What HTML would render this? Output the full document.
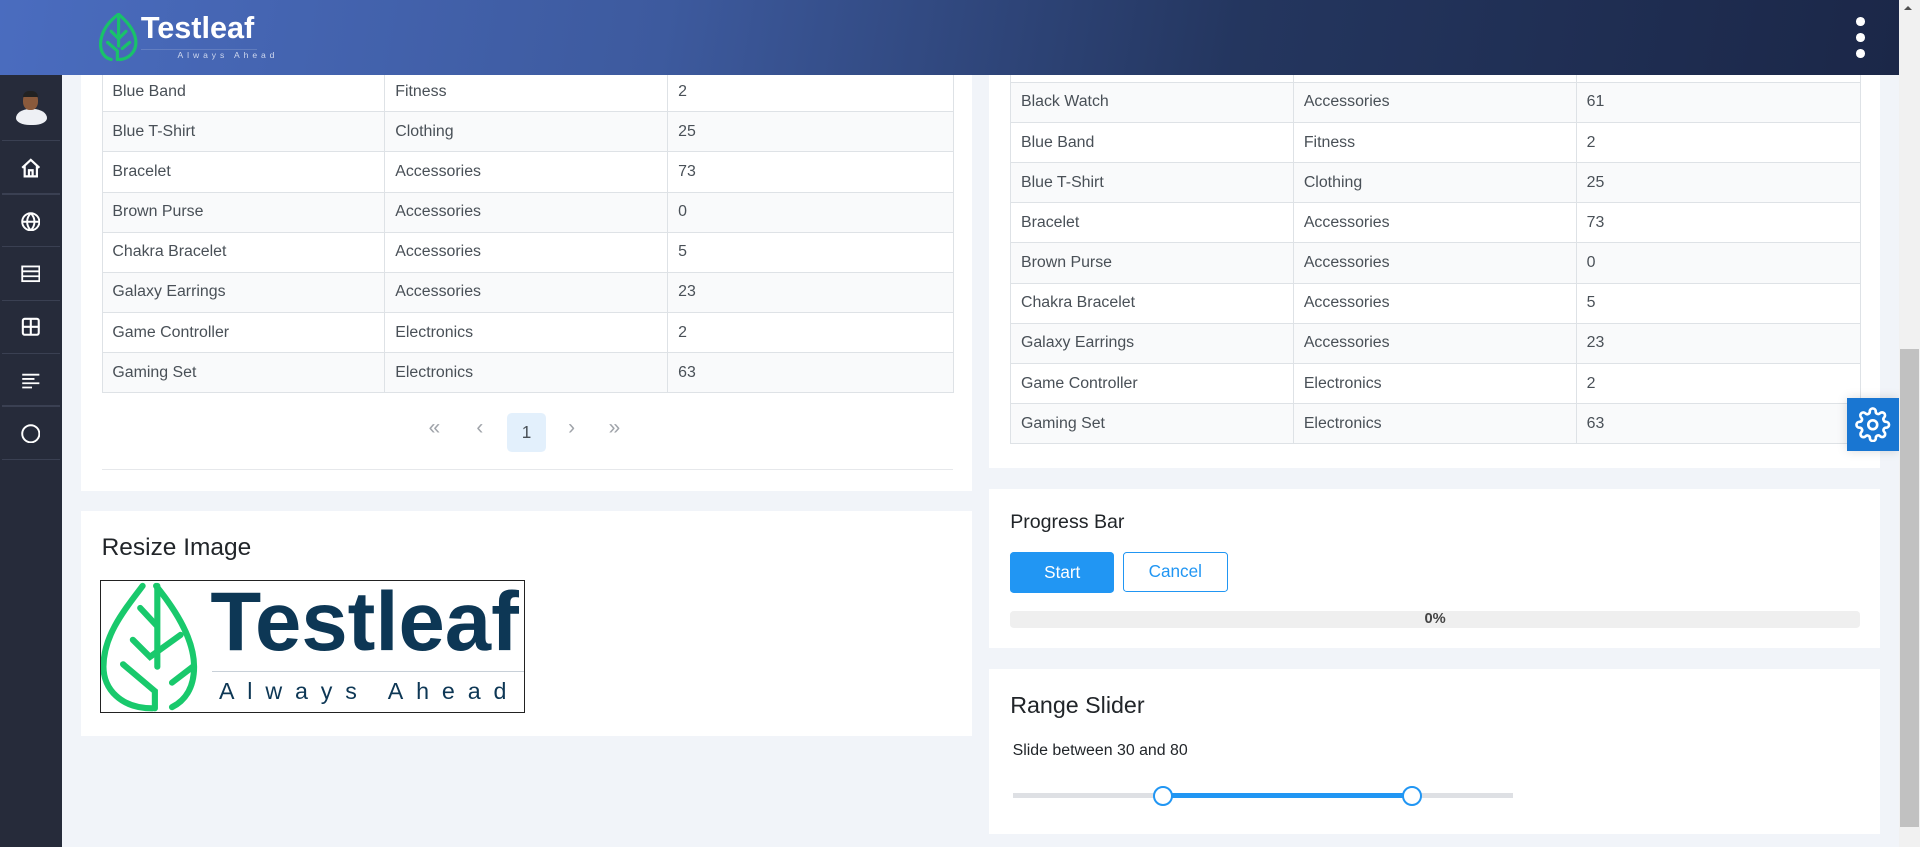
<!DOCTYPE html>
<html><head><meta charset="utf-8"><style>
html,body{margin:0;padding:0;overflow:hidden}
body{width:1568px;height:692px;zoom:1.22449;background:#f1f4f9;font-family:"Liberation Sans",sans-serif;color:#495057;position:relative}
.a{position:absolute}
.hdr{left:0;top:0;width:1551px;height:61px;background:linear-gradient(100deg,#4a6cbf 0%,#3d5a9e 35%,#24365f 65%,#1b2748 100%);z-index:5}
.side{left:0;top:61px;width:51px;height:631px;background:#262b3a;z-index:4}
.side .sep{position:absolute;left:2px;width:47px;height:1px;background:#3a4052}
.card{background:#fff}
table{border-collapse:collapse;font-size:13px;position:absolute;table-layout:fixed}
td{border:1px solid #dee2e6;height:32px;padding:0 0 0 8px;color:#495057}
tr.s td{background:#f9fafb}
.sb{left:1551px;top:0;width:17px;height:692px;background:#f1f1f1}
.pg{position:absolute;top:300px;color:#a0a4aa;font-size:17px}
</style></head><body>
<div class="a hdr">
  <svg class="a" style="left:81px;top:11px" width="32" height="40" viewBox="0 0 32 40" fill="none" stroke="#19c26a" stroke-width="2.6" stroke-linecap="round">
    <path d="M10 38 C2 36 0 28 2 20 C4 12 9 6 16 1 C23 7 29 14 30 22 C31 30 26 37 17 38"/>
    <path d="M16 1 V27"/><path d="M10 15 L16 21 L22 15"/><path d="M7 24 L15 31 V38"/><path d="M25 24 L19 29"/>
  </svg>
  <div class="a" style="left:115px;top:9px;color:#fff;font-size:25px;font-weight:bold">Testleaf</div>
  <div class="a" style="left:115px;top:40px;width:95px;height:1px;background:rgba(255,255,255,.15)"></div>
  <div class="a" style="left:145px;top:41px;color:#cfd8ee;font-size:7px;letter-spacing:3.2px">Always Ahead</div>
  <div class="a" style="left:1516px;top:14px;width:7px;height:7px;border-radius:50%;background:#fff"></div>
  <div class="a" style="left:1516px;top:27px;width:7px;height:7px;border-radius:50%;background:#fff"></div>
  <div class="a" style="left:1516px;top:40px;width:7px;height:7px;border-radius:50%;background:#fff"></div>
</div>
<div class="a side">
  <div class="a" style="left:13px;top:28px;width:25px;height:13px;border-radius:12px 12px 12px 12px/8px 8px 6px 6px;background:#eef0f4"></div>
  <div class="a" style="left:19px;top:14px;width:12px;height:15px;border-radius:45%;background:#8a5a3c"></div>
  <div class="a" style="left:19px;top:13px;width:12px;height:5px;border-radius:6px 6px 0 0;background:#222"></div>
  <div class="sep" style="top:53px"></div><div class="sep" style="top:97px"></div><div class="sep" style="top:140px"></div><div class="sep" style="top:184px"></div><div class="sep" style="top:227px"></div><div class="sep" style="top:270px"></div><div class="sep" style="top:314px"></div>
  <svg class="a" style="left:17px;top:68px" width="16" height="16" viewBox="0 0 16 16" fill="none" stroke="#fff" stroke-width="1.8"><path d="M1 8 L8 1.5 L15 8 M3 6.5 V15 H13 V6.5 M6.5 15 V10 H9.5 V15"/></svg>
  <svg class="a" style="left:17px;top:112px" width="16" height="16" viewBox="0 0 16 16" fill="none" stroke="#fff" stroke-width="1.6"><circle cx="8" cy="8" r="7"/><path d="M1 8 H15 M8 1 C4 5 4 11 8 15 C12 11 12 5 8 1"/></svg>
  <svg class="a" style="left:17px;top:155px" width="16" height="16" viewBox="0 0 16 16" fill="none" stroke="#fff" stroke-width="1.5"><rect x="1" y="2" width="14" height="12"/><path d="M1 6 H15 M1 10 H15"/></svg>
  <svg class="a" style="left:17px;top:198px" width="16" height="16" viewBox="0 0 16 16" fill="none" stroke="#fff" stroke-width="1.7"><rect x="1.5" y="1.5" width="13" height="13" rx="1.5"/><path d="M8 1.5 V14.5 M1.5 8 H14.5"/></svg>
  <svg class="a" style="left:17px;top:242px" width="16" height="16" viewBox="0 0 16 16" fill="none" stroke="#fff" stroke-width="1.5"><path d="M1 3 H15 M1 6.5 H11 M1 10 H15 M1 13.5 H9"/></svg>
  <svg class="a" style="left:17px;top:285px" width="16" height="16" viewBox="0 0 16 16" fill="none" stroke="#fff" stroke-width="1.6"><circle cx="8" cy="8" r="7"/></svg>
</div>

<div class="a card" style="left:66px;top:40px;width:728px;height:361px">
<table style="left:17px;top:18px;width:695px">
<colgroup><col style="width:231px"><col style="width:231px"><col style="width:233px"></colgroup>
<tr><td>Blue Band</td><td>Fitness</td><td>2</td></tr>
<tr class="s"><td>Blue T-Shirt</td><td>Clothing</td><td>25</td></tr>
<tr><td>Bracelet</td><td>Accessories</td><td>73</td></tr>
<tr class="s"><td>Brown Purse</td><td>Accessories</td><td>0</td></tr>
<tr><td>Chakra Bracelet</td><td>Accessories</td><td>5</td></tr>
<tr class="s"><td>Galaxy Earrings</td><td>Accessories</td><td>23</td></tr>
<tr><td>Game Controller</td><td>Electronics</td><td>2</td></tr>
<tr class="s"><td>Gaming Set</td><td>Electronics</td><td>63</td></tr>
</table>
<div class="pg" style="left:284px">«</div>
<div class="pg" style="left:323px">‹</div>
<div class="a" style="left:348px;top:297px;width:32px;height:32px;border-radius:4px;background:#e3f0fc;text-align:center;line-height:32px;font-size:14px;color:#495057">1</div>
<div class="pg" style="left:398px">›</div>
<div class="pg" style="left:431px">»</div>
<div class="a" style="left:17px;top:343px;width:695px;height:1px;background:#e6e8eb"></div>
</div>

<div class="a card" style="left:66px;top:417px;width:728px;height:184px">
<div class="a" style="left:17px;top:19px;font-size:20px;color:#212529">Resize Image</div>
<div class="a" style="left:16px;top:57px;width:345px;height:107px;border:1px solid #222;overflow:hidden;background:#fff">
  <svg class="a" style="left:0;top:0" width="90" height="107" viewBox="0 0 90 107" fill="none" stroke="#19c96c" stroke-width="5" stroke-linecap="round">
    <path d="M42 104 C16 104 2 88 2 70 C2 45 18 25 34 4 M45 4 C62 25 76 48 76 70 C76 88 68 98 58 103"/>
    <path d="M46 4 V70"/><path d="M26 48 L40 62 L65 44"/><path d="M18 68 L44 90 V104"/><path d="M75 70 L58 83"/><path d="M32 22 L45 36"/>
  </svg>
  <div class="a" style="left:89px;top:-6px;font-size:68px;font-weight:bold;color:#0d3755">Testleaf</div>
  <div class="a" style="left:90px;top:73px;width:255px;height:1px;background:#c8d0d8"></div>
  <div class="a" style="left:96px;top:79px;font-size:19px;color:#0d3755;letter-spacing:10.5px">Always Ahead</div>
</div>
</div>

<div class="a card" style="left:808px;top:40px;width:727px;height:342px">
<table style="left:17px;top:-6px;width:694px">
<colgroup><col style="width:231px"><col style="width:231px"><col style="width:232px"></colgroup>
<tr><td style="height:32px"></td><td></td><td></td></tr>
<tr class="s"><td>Black Watch</td><td>Accessories</td><td>61</td></tr>
<tr><td>Blue Band</td><td>Fitness</td><td>2</td></tr>
<tr class="s"><td>Blue T-Shirt</td><td>Clothing</td><td>25</td></tr>
<tr><td>Bracelet</td><td>Accessories</td><td>73</td></tr>
<tr class="s"><td>Brown Purse</td><td>Accessories</td><td>0</td></tr>
<tr><td>Chakra Bracelet</td><td>Accessories</td><td>5</td></tr>
<tr class="s"><td>Galaxy Earrings</td><td>Accessories</td><td>23</td></tr>
<tr><td>Game Controller</td><td>Electronics</td><td>2</td></tr>
<tr class="s"><td>Gaming Set</td><td>Electronics</td><td>63</td></tr>
</table>
</div>

<div class="a card" style="left:808px;top:399px;width:727px;height:130px">
<div class="a" style="left:17px;top:18px;font-size:16px;color:#212529">Progress Bar</div>
<div class="a" style="left:17px;top:52px;width:85px;height:33px;border-radius:3px;background:#2196f3;color:#fff;font-size:14px;text-align:center;line-height:33px">Start</div>
<div class="a" style="left:109px;top:52px;width:84px;height:31px;border-radius:3px;border:1px solid #2196f3;color:#2196f3;font-size:14px;text-align:center;line-height:31px">Cancel</div>
<div class="a" style="left:17px;top:100px;width:694px;height:14px;border-radius:3px;background:#efefef;text-align:center;font-size:12px;font-weight:bold;line-height:14px;color:#444">0%</div>
</div>

<div class="a card" style="left:808px;top:546px;width:727px;height:135px">
<div class="a" style="left:17px;top:19px;font-size:19px;color:#212529">Range Slider</div>
<div class="a" style="left:19px;top:60px;font-size:13px;color:#212529">Slide between 30 and 80</div>
<div class="a" style="left:19px;top:102px;width:409px;height:4px;background:#dee0e4"></div>
<div class="a" style="left:142px;top:102px;width:203px;height:4px;background:#2196f3"></div>
<div class="a" style="left:134px;top:96px;width:13px;height:13px;border-radius:50%;border:2px solid #2196f3;background:#fff"></div>
<div class="a" style="left:337px;top:96px;width:13px;height:13px;border-radius:50%;border:2px solid #2196f3;background:#fff"></div>
</div>

<div class="a" style="left:1508px;top:325px;width:43px;height:43px;background:#1976d2;box-shadow:0 0 8px rgba(0,0,0,.15)">
<svg class="a" style="left:7px;top:7px" width="29" height="29" viewBox="0 0 24 24" fill="none" stroke="#fff" stroke-width="1.8"><circle cx="12" cy="12" r="3"/><path d="M19.4 15a1.65 1.65 0 0 0 .33 1.820l.06.06a2 2 0 1 1-2.83 2.83l-.06-.06a1.65 1.65 0 0 0-1.82-.33 1.65 1.650 0 0 0-1 1.51V21a2 2 0 1 1-4 0v-.09A1.65 1.65 0 0 0 9 19.4a1.65 1.65 0 0 0-1.82.33l-.06.06a2 2 0 1 1-2.830-2.83l.06-.06A1.65 1.65 0 0 0 4.68 15a1.65 1.65 0 0 0-1.51-1H3a2 2 0 1 1 0-4h.09A1.65 1.65 0 0 0 4.6 9a1.65 1.65 0 0 0-.33-1.82l-.06-.06a2 2 0 1 1 2.83-2.83l.06.06A1.65 1.65 0 0 0 9 4.68a1.65 1.65 0 0 0 1-1.51V3a2 2 0 1 1 4 0v.09a1.65 1.65 0 0 0 1 1.51 1.65 1.65 0 0 0 1.82-.33l.06-.06a2 2 0 1 1 2.83 2.83l-.06.06A1.65 1.65 0 0 0 19.4 9a1.65 1.65 0 0 0 1.51 1H21a2 2 0 1 1 0 4h-.09a1.65 1.65 0 0 0-1.51 1z"/></svg>
</div>

<div class="a sb">
<div class="a" style="left:4px;top:5px;width:0;height:0;border-left:4px solid transparent;border-right:4px solid transparent;border-bottom:4px solid #505050"></div>
<div class="a" style="left:1px;top:285px;width:15px;height:390px;background:#c1c1c1"></div>
</div>
</body></html>
